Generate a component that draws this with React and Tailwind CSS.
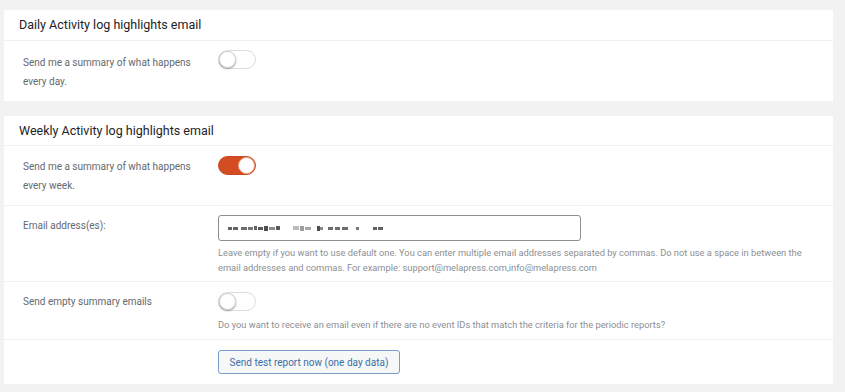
import React from "react";

function Toggle({ on }) {
  return on ? (
    <div className="relative h-[19px] w-[38px] rounded-full bg-[#d44d22] border border-[#c84a22]">
      <div className="absolute right-[0px] top-[0px] h-[17px] w-[17px] rounded-full bg-white border border-[#e9a68f]" />
    </div>
  ) : (
    <div className="relative h-[19px] w-[38px] rounded-full bg-white border border-[#dcdcde]">
      <div className="absolute left-[0px] top-[0px] h-[17px] w-[17px] rounded-full bg-white border border-[#d0d0d0] shadow-[0_1px_2px_rgba(0,0,0,0.35)]" />
    </div>
  );
}

function Blurred() {
  // [left offset from input content start, width, height, opacity]
  const blocks = [
    [0, 4, 3, 0.8], [5, 5, 3, 0.8],
    [13, 6, 3, 0.75], [20, 5, 3, 0.7], [26, 3, 4, 0.8], [30, 5, 3, 0.85], [36, 4, 5, 0.9], [41, 6, 3, 0.6], [48, 4, 4, 0.85],
    [65, 6, 4, 0.35], [72, 4, 5, 0.5], [77, 6, 3, 0.45],
    [89, 3, 5, 0.9], [92, 3, 3, 0.6],
    [100, 5, 3, 0.75], [107, 5, 3, 0.75], [114, 6, 3, 0.75],
    [128, 3, 3, 0.7],
    [145, 4, 3, 0.8], [150, 5, 3, 0.8],
  ];
  return (
    <div className="relative h-full">
      {blocks.map(([l, w, h, o], i) => (
        <span
          key={i}
          className="absolute bg-[#3c3c3c]"
          style={{ left: l, width: w, height: h, top: 12 - Math.floor(h / 2), opacity: o }}
        />
      ))}
    </div>
  );
}

export default function App() {
  const font = { fontFamily: "Roboto, 'Noto Sans', sans-serif" };
  return (
    <div className="h-[392px] w-[845px] bg-[#f2f2f2] pt-[10px] pl-[4px] pr-[12px]" style={font}>
      <div className="bg-white">
        <div className="h-[31px] border-b border-[#f0f0f1] flex items-center pl-[15px] pt-[1px] text-[12.5px] text-[#1d2327]">
          Daily Activity log highlights email
        </div>
        <div className="h-[60px] flex pt-[9px]">
          <div className="w-[214px] pl-[19px] pt-[3px] text-[10px] leading-[19px] text-[#646970]">
            Send me a summary of what happens
            <br />
            every day.
          </div>
          <div className="pt-[0px]">
            <Toggle on={false} />
          </div>
        </div>
      </div>

      <div className="bg-white mt-[15px]">
        <div className="h-[30px] border-b border-[#f0f0f1] flex items-center pl-[15px] pt-[1px] text-[12.5px] text-[#1d2327]">
          Weekly Activity log highlights email
        </div>
        <div className="h-[60px] flex pt-[10px] border-b border-[#f0f0f1]">
          <div className="w-[214px] pl-[19px] pt-[1px] text-[10px] leading-[19px] text-[#646970]">
            Send me a summary of what happens
            <br />
            every week.
          </div>
          <div>
            <Toggle on={true} />
          </div>
        </div>
        <div className="h-[76px] flex pt-[9px] border-b border-[#f0f0f1]">
          <div className="w-[214px] pl-[19px] pt-[1px] text-[10px] leading-[19px] text-[#646970]">
            Email address(es):
          </div>
          <div className="flex-1">
            <div className="h-[26px] w-[363px] rounded-[3px] border border-[#8c8f94] bg-white pl-[9px]">
              <Blurred />
            </div>
            <div className="mt-[4px] text-[9.3px] leading-[15px] text-[#8c8f94] pr-[18px]">
              Leave empty if you want to use default one. You can enter multiple email addresses separated by commas. Do not use a space in between the email addresses and commas. For example: support@melapress.com,info@melapress.com
            </div>
          </div>
        </div>
        <div className="h-[58px] flex pt-[9px] border-b border-[#f0f0f1]">
          <div className="w-[214px] pl-[19px] pt-[1px] text-[10px] leading-[19px] text-[#646970]">
            Send empty summary emails
          </div>
          <div className="flex-1">
            <div className="pt-[1px]">
              <Toggle on={false} />
            </div>
            <div className="mt-[6px] text-[9.3px] leading-[15px] text-[#8c8f94]">
              Do you want to receive an email even if there are no event IDs that match the criteria for the periodic reports?
            </div>
          </div>
        </div>
        <div className="h-[44px] flex items-center pl-[214px]">
          <button className="h-[24px] w-[182px] rounded-[3px] border border-[#7a9cc6] bg-[#f6f7f7] text-[10px] text-[#3a6fa8]">
            Send test report now (one day data)
          </button>
        </div>
      </div>
    </div>
  );
}
